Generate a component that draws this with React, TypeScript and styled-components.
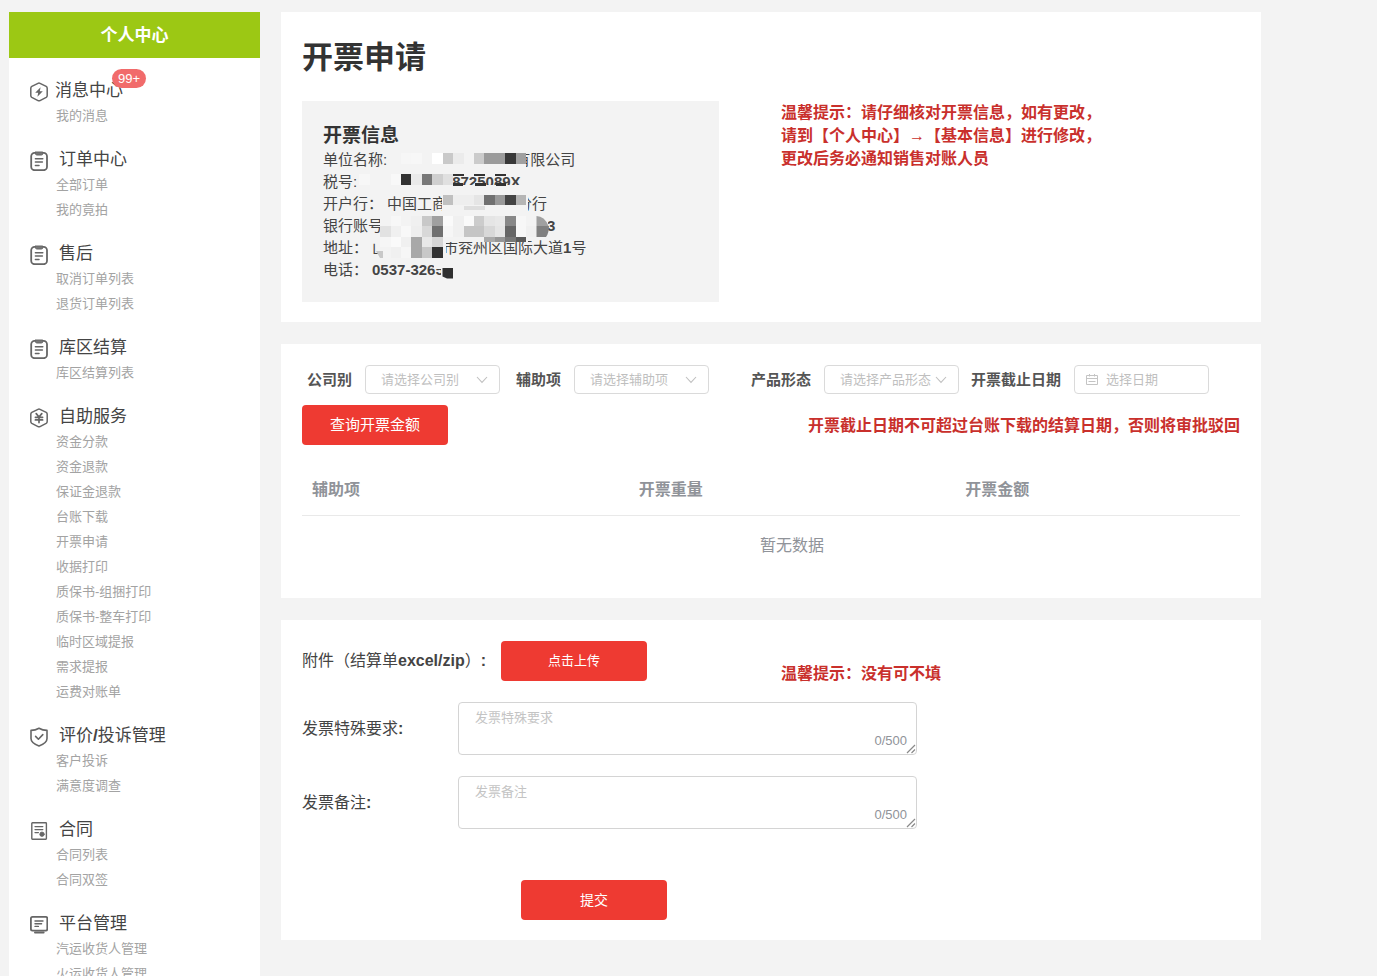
import React from 'react';
import styled, { createGlobalStyle } from 'styled-components';

const GlobalStyle = createGlobalStyle`
  * { box-sizing: border-box; }
  body {
    margin: 0;
    background: #f3f3f3;
    color: #333;
    font-family: "Liberation Sans", "Noto Sans CJK SC", sans-serif;
    font-size: 16px;
    line-height: 20px;
  }
  button, input, select, textarea { font-family: inherit; }
`;

const Page = styled.div`
  display: flex;
  align-items: flex-start;
  gap: 21px;
  padding: 12px 116px 0 9px;
`;

/* ---------- sidebar ---------- */

const Sidebar = styled.nav`
  flex: 0 0 251px;
  background: #fff;
  padding-bottom: 20px;
`;

const SidebarHeader = styled.div`
  height: 46px;
  margin-bottom: 20px;
  background: #9cc814;
  color: #fff;
  font-size: 17px;
  font-weight: 700;
  line-height: 47px;
  text-align: center;
`;

const Group = styled.section`
  padding-left: 21px;
  margin-bottom: 19px;
`;

const GroupTitle = styled.h2<{ $gap?: number }>`
  display: flex;
  align-items: center;
  gap: ${(p) => p.$gap ?? 11}px;
  height: 25px;
  margin: 0;
  color: #444;
  font-size: 17px;
  font-weight: 400;
  line-height: 25px;

  svg { flex: none; margin-top: 2px; }
`;

const TitleText = styled.span`
  position: relative;
`;

const Badge = styled.span`
  position: absolute;
  left: 57px;
  top: -9px;
  width: 34px;
  height: 19px;
  border-radius: 10px;
  background: #f16b6b;
  color: #fff;
  font-size: 13px;
  line-height: 19px;
  text-align: center;
`;

const LinkList = styled.ul`
  list-style: none;
  margin: 0;
  padding: 0 0 0 26px;
`;

const NavLink = styled.a`
  display: block;
  height: 25px;
  color: #a3a3a3;
  font-size: 13px;
  line-height: 25px;
  text-decoration: none;
`;

/* ---------- main ---------- */

const Main = styled.main`
  flex: 1;
  min-width: 0;
  display: flex;
  flex-direction: column;
  gap: 22px;
`;

const Card = styled.section`
  background: #fff;
  padding: 21px 21px 20px;
`;

const PageTitle = styled.h1`
  margin: 0 0 18px;
  font-size: 31px;
  line-height: 50px;
  font-weight: 700;
`;

const InfoRow = styled.div`
  display: flex;
  align-items: flex-start;
  gap: 62px;
`;

const InfoBox = styled.div`
  position: relative;
  flex: 0 1 417px;
  padding: 21px;
  background: #f3f3f3;
`;

const InfoHeading = styled.h3`
  margin: 0;
  font-size: 19px;
  line-height: 27px;
`;

const InfoLine = styled.div`
  display: flex;
  height: 22px;
  color: #444;
  font-size: 15px;
  line-height: 22px;
  white-space: nowrap;
`;

const Masked = styled.span<{ $width: number }>`
  flex: 0 0 ${(p) => p.$width}px;
`;

const Mosaic = styled.svg`
  position: absolute;
  left: 0;
  top: 0;
`;

const Latin = styled.b`
  font-weight: 700;
`;

const Warning = styled.p`
  margin: 0;
  color: #c9302c;
  font-size: 16px;
  font-weight: 700;
  line-height: 23px;
  white-space: nowrap;
`;

const Filters = styled.div`
  display: grid;
  grid-template-columns: 198px 209px 250px 250px;
  margin-bottom: 11px;
`;

const Field = styled.div`
  display: flex;
  justify-content: flex-end;
  align-items: center;
  gap: 13px;
`;

const FieldLabel = styled.label`
  color: #555;
  font-size: 15px;
  font-weight: 700;
  white-space: nowrap;
`;

const Control = styled.div`
  position: relative;
  width: 135px;
  height: 29px;
`;

const Select = styled.select`
  width: 100%;
  height: 100%;
  padding: 0 24px 0 15px;
  border: 1px solid #dadada;
  border-radius: 4px;
  background: #fff;
  color: #bfbfbf;
  font-size: 13px;
  appearance: none;
`;

const DateInput = styled.input`
  width: 100%;
  height: 100%;
  padding: 0 8px 0 31px;
  border: 1px solid #dadada;
  border-radius: 4px;
  background: #fff;
  font-size: 13px;
  &::placeholder { color: #bfbfbf; }
`;

const ControlIcon = styled.svg<{ $side: 'left' | 'right' }>`
  position: absolute;
  top: 8px;
  ${(p) => p.$side}: 12px;
  pointer-events: none;
`;

const Button = styled.button<{ $size: number }>`
  width: 146px;
  height: 40px;
  padding: 0;
  border: 0;
  border-radius: 4px;
  background: #ee3a32;
  color: #fff;
  font-size: ${(p) => p.$size}px;
  line-height: 20px;
  cursor: pointer;
`;

const QueryRow = styled.div`
  display: flex;
  justify-content: space-between;
  align-items: center;
  margin-bottom: 20px;
`;

const TableClip = styled.div`
  overflow: hidden;
`;

const Table = styled.table`
  width: calc(100% + 42px);
  margin-bottom: 1px;
  border-collapse: collapse;
  table-layout: fixed;
  color: #909399;
`;

const HeadCell = styled.th`
  height: 50px;
  padding: 0 10px;
  border-bottom: 1px solid #e9e9e9;
  font-size: 16px;
  font-weight: 700;
  text-align: left;
`;

const EmptyCell = styled.td`
  height: 62px;
  padding: 0;
  font-size: 16px;
  text-align: center;
`;

const Form = styled.form`
  display: flex;
  flex-direction: column;
  gap: 21px;
`;

const FormRow = styled.div`
  display: flex;
  align-items: center;
`;

const FormLabel = styled.label<{ $width: number }>`
  flex: 0 0 ${(p) => p.$width}px;
  color: #444;
  font-size: 16px;
  white-space: nowrap;
`;

const FormTip = styled(Warning)`
  align-self: flex-end;
  margin-left: 134px;
  line-height: 14px;
`;

const TextAreaBox = styled.div`
  position: relative;
  flex: 0 1 459px;
  height: 53px;
`;

const TextArea = styled.textarea`
  display: block;
  width: 100%;
  height: 53px;
  padding: 5px 16px;
  border: 1px solid #d4d4d4;
  border-radius: 4px;
  font-size: 13px;
  line-height: 20px;
  resize: vertical;
  &::placeholder { color: #c4c4c4; }
  &::-webkit-resizer { background: transparent; }
`;

const Grip = styled.svg`
  position: absolute;
  right: 1px;
  bottom: 1px;
  pointer-events: none;
`;

const Counter = styled.span`
  position: absolute;
  right: 10px;
  bottom: 4px;
  color: #909399;
  font-size: 13px;
  line-height: 20px;
  pointer-events: none;
`;

const SubmitRow = styled.div`
  padding: 30px 0 0 219px;
`;

/* ---------- icons ---------- */

const iconProps = {
  width: 18,
  height: 20,
  viewBox: '0 0 18 20',
  fill: 'none',
  stroke: '#666',
  strokeWidth: 1.6,
  strokeLinecap: 'round' as const,
  strokeLinejoin: 'round' as const,
};

const hexagon =
  'M8 1.3 Q9 0.8 10 1.3 L16.2 4.4 Q17.2 5 17.2 6.2 V13.6 Q17.2 14.8 16.2 15.400 L10 18.600 Q9 19.100 8 18.600 L1.800 15.400 Q0.800 14.800 0.800 13.600 V6.200 Q0.800 5 1.800 4.400 Z';

const MessageIcon = () => (
  <svg {...iconProps}>
    <path d={hexagon} strokeWidth="1.5" />
    <path d="M10.6 5.2 L5.2 10.7 H8.2 L7.4 14.8 L12.8 9.2 H9.8 Z" fill="#666" stroke="none" />
  </svg>
);

const ClipboardIcon = () => (
  <svg {...iconProps}>
    <rect x="1.2" y="1.8" width="15.8" height="17.4" rx="3.4" strokeWidth="1.8" />
    <path d="M5.4 1 H12.8 V2.600 Q12.800 4 11.400 4 H6.800 Q5.400 4 5.400 2.600 Z" fill="#777" strokeWidth="1" />
    <path d="M5.400 7.800 H12.800 M5.400 11 H12.400 M5.400 14.400 H9" strokeWidth="1.5" />
  </svg>
);

const YuanIcon = () => (
  <svg {...iconProps}>
    <path d={hexagon} strokeWidth="1.5" />
    <path d="M6.2 5.6 L9 9 L11.8 5.6 M9 9 V14.600 M5.400 9.300 H12.600 M5.400 11.900 H12.600" strokeWidth="1.7" />
  </svg>
);

const ShieldIcon = () => (
  <svg {...iconProps}>
    <path d="M9 1.2 Q12.600 3.400 17 3.400 V11.400 Q17 15.800 9 19 Q1 15.800 1 11.400 V3.400 Q5.400 3.400 9 1.200 Z" />
    <path d="M5.6 9.400 L8.400 12.200 L12.800 7.600" />
  </svg>
);

const ContractIcon = () => (
  <svg {...iconProps}>
    <rect x="1.8" y="1.800" width="14.600" height="16.400" rx="0.600" strokeWidth="1.400" />
    <path d="M5 5.600 H12.800 M5 8.600 H12.800 M5 11.600 H8.400" strokeWidth="1.300" />
    <circle cx="12" cy="13.200" r="2.200" fill="#666" strokeWidth="0.800" />
  </svg>
);

const PlatformIcon = () => (
  <svg {...iconProps}>
    <rect x="0.9" y="1.800" width="16.400" height="13.800" rx="1.600" strokeWidth="1.800" />
    <path d="M5 6 H13 M5 8.700 H11.600 M5 11.400 H8.400" strokeWidth="1.400" />
    <path d="M5 17.600 H13.600" strokeWidth="2" />
  </svg>
);

const Chevron = () => (
  <ControlIcon $side="right" width="12" height="13" viewBox="0 0 12 13" fill="none" stroke="#c0c0c0" strokeWidth="1.1" aria-hidden="true">
    <path d="M1 4 L6 9.400 L11 4" />
  </ControlIcon>
);

const CalendarIcon = () => (
  <ControlIcon $side="left" width="12" height="13" viewBox="0 0 12 13" fill="none" stroke="#c4c4c4" aria-hidden="true">
    <path d="M0.5 2.500 H11.500 V11.500 H0.500 Z M0.500 5.500 H11.500 M3.500 1 V3.500 M8.500 1 V3.500 M2.500 8.500 H9.500" />
  </ControlIcon>
);

const ResizeGrip = () => (
  <Grip width="10" height="10" viewBox="0 0 10 10" fill="none" stroke="#8a8a8a" strokeWidth="1.200" aria-hidden="true">
    <path d="M1 9 L9 1 M5.500 9 L9 5.500" />
  </Grip>
);

/* ---------- privacy mosaic ---------- */

const CELL = 10.43;
const ORIGIN_X = 88.5;
const ORIGIN_Y = 52.3;

// [row, column, grey level]
const cells: [number, number, number][] = [
  [0, 1, 246], [0, 2, 247], [0, 4, 255], [0, 5, 201], [0, 6, 235], [0, 8, 203], [0, 9, 155], [0, 10, 155], [0, 11, 56], [0, 12, 160],
  [2, -3, 247], [2, 0, 248], [2, 1, 50], [2, 2, 234], [2, 3, 120], [2, 4, 207], [2, 5, 224],
  [4, 5, 192], [4, 6, 238], [4, 7, 238], [4, 8, 229], [4, 9, 112], [4, 10, 153], [4, 11, 68], [4, 12, 181],
  [6, 0, 247], [6, 2, 240], [6, 3, 200], [6, 4, 160], [6, 5, 250], [6, 6, 240], [6, 7, 250], [6, 8, 204], [6, 9, 229], [6, 10, 232], [6, 11, 136], [6, 12, 247],
  [7, -1, 226], [7, 0, 240], [7, 1, 248], [7, 2, 238], [7, 3, 216], [7, 4, 112], [7, 5, 246], [7, 6, 240], [7, 7, 197], [7, 8, 197], [7, 9, 216], [7, 10, 229], [7, 11, 102], [7, 12, 247], [7, 13, 240],
  [8, -1, 246], [8, 0, 250], [8, 1, 240], [8, 2, 168], [8, 3, 232], [8, 4, 214],
  [9, 0, 240], [9, 1, 246], [9, 2, 168], [9, 3, 200], [9, 4, 50],
];

const halfCells: [number, number][] = [[9, 170], [10, 150], [11, 120], [12, 90]];

const grey = (v: number) => `rgb(${v},${v},${v})`;

const PrivacyMosaic = () => (
  <Mosaic width="290" height="201" viewBox="0 0 290 201" shapeRendering="crispEdges" aria-hidden="true">
    <g fill="#f3f3f3">
      <rect x="86" y="50" width="138" height="18" />
      <rect x="56" y="70" width="94" height="22" />
      <rect x="150" y="84" width="70" height="10" />
      <rect x="140" y="93" width="86" height="19" />
      <rect x="78" y="115" width="168" height="20" />
      <rect x="78" y="135" width="66" height="24" />
      <rect x="76" y="138" width="14" height="14" />
      <rect x="144" y="134" width="82" height="7" />
      <rect x="132" y="160" width="24" height="8" />
      <rect x="139" y="164" width="20" height="16" />
    </g>
    {cells.map(([row, col, level]) => (
      <rect
        key={`${row}:${col}`}
        x={ORIGIN_X + col * CELL}
        y={ORIGIN_Y + row * CELL}
        width={CELL}
        height={CELL}
        fill={grey(level)}
      />
    ))}
    {halfCells.map(([col, level]) => (
      <rect key={col} x={ORIGIN_X + col * CELL} y={ORIGIN_Y + 8 * CELL} width={CELL} height={5} fill={grey(level)} />
    ))}
    <rect x="162" y="105" width="21" height="4" fill="#dedede" />
    <path d="M234.500 115 q8 0 12 10 h-12 Z" fill="#a0a0a0" shapeRendering="auto" />
    <path d="M234.500 125 h12.500 q0 7 -3 11 h-9.500 Z" fill="#808080" shapeRendering="auto" />
    <path d="M74 150 l4 7 h3 v-7 Z" fill="#c8c8c8" shapeRendering="auto" />
    <path d="M140.500 167 h10.500 v10.500 h-6 l-4.500 -2 Z" fill="#2f2f2f" shapeRendering="auto" />
    <g fill="#333">
      <rect x="151" y="73" width="11" height="2" />
      <rect x="172" y="73" width="11" height="2" />
      <rect x="193" y="73" width="11" height="2" />
      <rect x="151" y="82" width="10" height="3" />
      <rect x="173" y="82" width="11" height="3" />
      <rect x="194" y="82" width="10" height="3" />
    </g>
  </Mosaic>
);

/* ---------- data ---------- */

type MenuGroup = { title: React.ReactNode; icon: React.FC; links: string[]; badge?: string };

const menu: MenuGroup[] = [
  { title: '消息中心', icon: MessageIcon, links: ['我的消息'], badge: '99+' },
  { title: '订单中心', icon: ClipboardIcon, links: ['全部订单', '我的竟拍'] },
  { title: '售后', icon: ClipboardIcon, links: ['取消订单列表', '退货订单列表'] },
  { title: '库区结算', icon: ClipboardIcon, links: ['库区结算列表'] },
  {
    title: '自助服务',
    icon: YuanIcon,
    links: ['资金分款', '资金退款', '保证金退款', '台账下载', '开票申请', '收据打印', '质保书-组捆打印', '质保书-整车打印', '临时区域提报', '需求提报', '运费对账单'],
  },
  { title: <>评价<Latin>/</Latin>投诉管理</>, icon: ShieldIcon, links: ['客户投诉', '满意度调查'] },
  { title: '合同', icon: ContractIcon, links: ['合同列表', '合同双签'] },
  { title: '平台管理', icon: PlatformIcon, links: ['汽运收货人管理', '火运收货人管理'] },
];

const selects = [
  { id: 'company', label: '公司别', placeholder: '请选择公司别' },
  { id: 'auxiliary', label: '辅助项', placeholder: '请选择辅助项' },
  { id: 'form', label: '产品形态', placeholder: '请选择产品形态' },
];

const notes = [
  { id: 'requirement', label: '发票特殊要求', placeholder: '发票特殊要求' },
  { id: 'remark', label: '发票备注', placeholder: '发票备注' },
];

export default function App() {
  return (
    <>
      <GlobalStyle />
      <Page>
        <Sidebar>
          <SidebarHeader>个人中心</SidebarHeader>
          {menu.map(({ title, icon: Icon, links, badge }) => (
            <Group key={links[0]}>
              <GroupTitle $gap={badge ? 7 : 11}>
                <Icon />
                <TitleText>
                  {title}
                  {badge && <Badge>{badge}</Badge>}
                </TitleText>
              </GroupTitle>
              <LinkList>
                {links.map((link) => (
                  <li key={link}>
                    <NavLink href="#">{link}</NavLink>
                  </li>
                ))}
              </LinkList>
            </Group>
          ))}
        </Sidebar>

        <Main>
          <Card>
            <PageTitle>开票申请</PageTitle>
            <InfoRow>
              <InfoBox>
                <InfoHeading>开票信息</InfoHeading>
                <InfoLine>单位名称:<Masked $width={128} />有限公司</InfoLine>
                <InfoLine>税号:<Masked $width={95} /><Latin>8725089X</Latin></InfoLine>
                <InfoLine>开户行：<Masked $width={4} />中国工商<Masked $width={70} />分行</InfoLine>
                <InfoLine>银行账号<Masked $width={164} /><Latin>3</Latin></InfoLine>
                <InfoLine>地址：<Masked $width={4} />山<Masked $width={56} />市兖州区国际大道<Latin>1</Latin>号</InfoLine>
                <InfoLine>电话：<Masked $width={4} /><Latin>0537-3265</Latin></InfoLine>
                <PrivacyMosaic />
              </InfoBox>
              <Warning>
                温馨提示：请仔细核对开票信息，如有更改，<br />
                请到【个人中心】→【基本信息】进行修改，<br />
                更改后务必通知销售对账人员
              </Warning>
            </InfoRow>
          </Card>

          <Card>
            <Filters>
              {selects.map(({ id, label, placeholder }) => (
                <Field key={id}>
                  <FieldLabel htmlFor={id}>{label}</FieldLabel>
                  <Control>
                    <Select id={id} defaultValue="">
                      <option value="">{placeholder}</option>
                    </Select>
                    <Chevron />
                  </Control>
                </Field>
              ))}
              <Field>
                <FieldLabel htmlFor="deadline">开票截止日期</FieldLabel>
                <Control>
                  <DateInput id="deadline" type="text" placeholder="选择日期" />
                  <CalendarIcon />
                </Control>
              </Field>
            </Filters>
            <QueryRow>
              <Button type="button" $size={15}>查询开票金额</Button>
              <Warning>开票截止日期不可超过台账下载的结算日期，否则将审批驳回</Warning>
            </QueryRow>
            <TableClip>
              <Table>
                <thead>
                  <tr>
                    <HeadCell>辅助项</HeadCell>
                    <HeadCell>开票重量</HeadCell>
                    <HeadCell>开票金额</HeadCell>
                  </tr>
                </thead>
                <tbody>
                  <tr>
                    <EmptyCell colSpan={3}>暂无数据</EmptyCell>
                  </tr>
                </tbody>
              </Table>
            </TableClip>
          </Card>

          <Card>
            <Form>
              <FormRow>
                <FormLabel htmlFor="upload" $width={199}>
                  附件（结算单<Latin>excel/zip</Latin>）<Latin>:</Latin>
                </FormLabel>
                <Button id="upload" type="button" $size={13}>点击上传</Button>
                <FormTip>温馨提示：没有可不填</FormTip>
              </FormRow>
              {notes.map(({ id, label, placeholder }) => (
                <FormRow key={id}>
                  <FormLabel htmlFor={id} $width={156}>{label}<Latin>:</Latin></FormLabel>
                  <TextAreaBox>
                    <TextArea id={id} placeholder={placeholder} maxLength={500} />
                    <Counter>0/500</Counter>
                    <ResizeGrip />
                  </TextAreaBox>
                </FormRow>
              ))}
              <SubmitRow>
                <Button type="submit" $size={14}>提交</Button>
              </SubmitRow>
            </Form>
          </Card>
        </Main>
      </Page>
    </>
  );
}
